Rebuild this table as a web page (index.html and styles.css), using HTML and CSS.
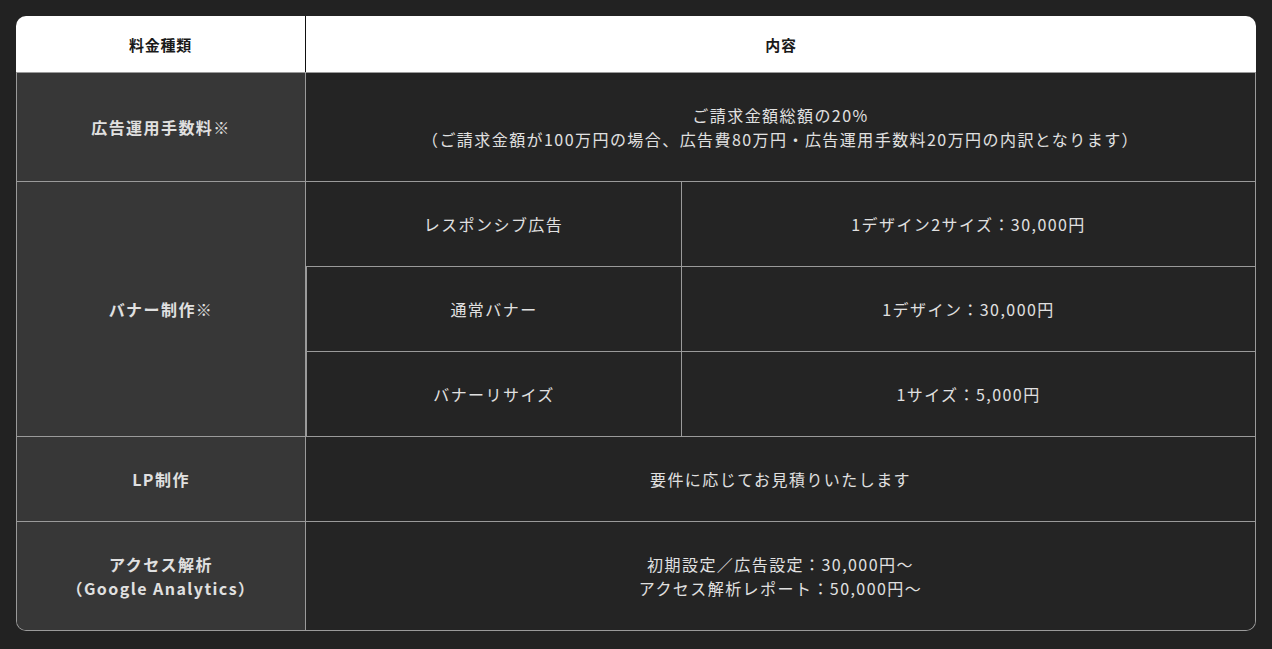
FILE: index.html
```html
<!DOCTYPE html>
<html lang="ja">
<head>
<meta charset="utf-8">
<title>料金</title>
<link rel="stylesheet" href="styles.css">
</head>
<body>
<div class="price">
  <div class="head">
    <div class="hcell hcell-left">料金種類</div>
    <div class="hcell">内容</div>
  </div>
  <div class="body">
    <div class="row row-tall">
      <div class="label">広告運用手数料※</div>
      <div class="content">ご請求金額総額の20%<br>（ご請求金額が100万円の場合、広告費80万円・広告運用手数料20万円の内訳となります）</div>
    </div>
    <div class="row">
      <div class="label">バナー制作※</div>
      <div class="subs">
        <div class="sub">
          <div class="sub-name">レスポンシブ広告</div>
          <div class="sub-val">1デザイン2サイズ：30,000円</div>
        </div>
        <div class="sub">
          <div class="sub-name">通常バナー</div>
          <div class="sub-val">1デザイン：30,000円</div>
        </div>
        <div class="sub">
          <div class="sub-name">バナーリサイズ</div>
          <div class="sub-val">1サイズ：5,000円</div>
        </div>
      </div>
    </div>
    <div class="row row-short">
      <div class="label">LP制作</div>
      <div class="content">要件に応じてお見積りいたします</div>
    </div>
    <div class="row row-tall">
      <div class="label">アクセス解析<br>（Google Analytics）</div>
      <div class="content">初期設定／広告設定：30,000円〜<br>アクセス解析レポート：50,000円〜</div>
    </div>
  </div>
</div>
</body>
</html>
```

FILE: styles.css
```css
* { box-sizing: border-box; }
html, body { margin: 0; }
body {
  background: #222222;
  padding: 16px;
  font-family: "Noto Sans CJK JP", "Noto Sans", sans-serif;
  color: #e0e0e0;
}
.price {
  width: 1240px;
}
.head {
  display: grid;
  grid-template-columns: 290px 1fr;
  height: 56px;
  background: #ffffff;
  border-radius: 10px 10px 0 0;
  color: #1a1a1a;
}
.hcell {
  display: flex;
  align-items: center;
  justify-content: center;
  font-size: 15px;
  font-weight: 700;
  letter-spacing: 0.05em;
}
.hcell-left {
  border-right: 1px solid #111;
}
.body {
  border: 1px solid #9a9a9a;
  border-top: none;
  border-radius: 0 0 10px 10px;
  overflow: hidden;
}
.row {
  display: grid;
  grid-template-columns: 289px 1fr;
  border-top: 1px solid #9a9a9a;
}
.row-tall { height: 109px; }
.row-short { height: 85px; }
.label {
  background: #373737;
  display: flex;
  align-items: center;
  justify-content: center;
  text-align: center;
  font-size: 16px;
  font-weight: 700;
  letter-spacing: 0.09em;
  line-height: 24px;
  border-right: 1px solid #9a9a9a;
}
.content {
  background: #242424;
  display: flex;
  align-items: center;
  justify-content: center;
  text-align: center;
  font-size: 16px;
  letter-spacing: 0.09em;
  line-height: 24px;
}
.subs {
  background: #242424;
  display: flex;
  flex-direction: column;
}
.sub {
  display: grid;
  grid-template-columns: 376px 1fr;
  height: 84px;
}
.sub + .sub {
  border-top: 1px solid #9a9a9a;
  height: 85px;
  border-left: 1px solid #9a9a9a;
  grid-template-columns: 375px 1fr;
}
.sub-name, .sub-val {
  display: flex;
  align-items: center;
  justify-content: center;
  font-size: 16px;
  letter-spacing: 0.09em;
}
.sub-name {
  border-right: 1px solid #9a9a9a;
}
```
